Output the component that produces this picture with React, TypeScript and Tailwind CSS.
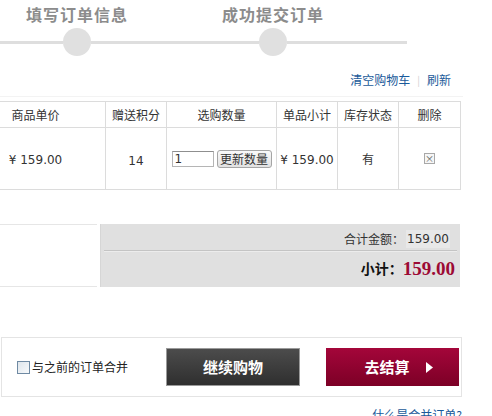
import React from "react";

const cjk = "font-['Noto_Sans_CJK_SC','Noto_Sans',sans-serif]";

function Step({ title }: { title: string }) {
  return (
    <div className="flex w-[28px] shrink-0 flex-col items-center">
      <div className="mt-[3px] h-[22px] whitespace-nowrap text-[16px] font-bold leading-[22px] tracking-[1px] text-[#8c8c8c]">
        {title}
      </div>
      <div className="mt-[3px] h-[28px] w-[28px] rounded-full bg-[#e0e0e0]" />
    </div>
  );
}

export default function App() {
  const head = ["商品单价", "赠送积分", "选购数量", "单品小计", "库存状态", "删除"];
  return (
    <div className={`relative h-[416px] w-[492px] overflow-hidden bg-white text-[12px] text-[#333] ${cjk}`}>
      {/* progress */}
      <div className="flex w-[407px] items-end">
        <div className="mb-[12px] h-[3px] w-[63px] bg-[#dedede]" />
        <Step title="填写订单信息" />
        <div className="mb-[12px] h-[3px] w-[168px] bg-[#dedede]" />
        <Step title="成功提交订单" />
        <div className="mb-[12px] h-[3px] flex-1 bg-[#dedede]" />
      </div>

      {/* links */}
      <div className="mt-[16px] flex h-[25px] w-[463px] items-start justify-end border-b border-[#f3f3f3] pr-[12px] leading-[16px]">
        <span className="text-[#1a5a9a]">清空购物车</span>
        <span className="mx-[7px] text-[10px] text-[#d0d0d0]">|</span>
        <span className="text-[#1a5a9a]">刷新</span>
      </div>

      {/* table */}
      <div className="ml-[-34px] mt-[4px] grid w-[495px] grid-cols-[140px_61px_110px_61px_61px_62px] border-t border-[#dcdcdc]">
        {head.map((h) => (
          <div
            key={h}
            className="flex h-[26px] items-center justify-center border-b border-r border-[#dcdcdc] text-[12px] text-[#333]"
          >
            {h}
          </div>
        ))}
        <div className="flex h-[62px] items-center justify-center border-b border-r border-[#dcdcdc] pt-[2px] font-['DejaVu_Sans',sans-serif] text-[12px]">
          ¥ 159.00
        </div>
        <div className="flex h-[62px] items-center justify-center border-b border-r border-[#dcdcdc] pt-[4px] font-['DejaVu_Sans',sans-serif] text-[12px]">
          14
        </div>
        <div className="flex h-[62px] items-center justify-center gap-[3px] border-b border-r border-[#dcdcdc]">
          <input
            readOnly
            value="1"
            className="h-[16px] w-[42px] border border-[#b5b5b5] border-t-[#8f8f8f] bg-white px-[2px] font-['DejaVu_Sans',sans-serif] text-[12px] leading-[14px] text-[#333] outline-none"
          />
          <button className="flex h-[18px] w-[55px] items-center justify-center rounded-[3px] border border-[#a5a5a5] bg-gradient-to-b from-[#fafafa] to-[#e2e2e2] text-[12px] leading-[16px] text-[#333]">
            更新数量
          </button>
        </div>
        <div className="flex h-[62px] items-center justify-center border-b border-r border-[#dcdcdc] pt-[2px] font-['DejaVu_Sans',sans-serif] text-[12px]">
          ¥ 159.00
        </div>
        <div className="flex h-[62px] items-center justify-center border-b border-r border-[#dcdcdc] text-[12px]">
          有
        </div>
        <div className="flex h-[62px] items-center justify-center border-b border-r border-[#dcdcdc]">
          <span className="flex h-[11px] w-[11px] items-center justify-center border border-[#a8a8a8] bg-[#f6f6f6] text-[9px] leading-none text-[#555]">
            ×
          </span>
        </div>
      </div>

      {/* summary */}
      <div className="mt-[34px] flex h-[63px] w-[460px]">
        <div className="w-[97px] border-y border-[#e6e6e6]" />
        <div className="ml-[3px] flex flex-1 flex-col border-l border-[#d6d6d6] bg-[#e0e0e0]">
          <div className="flex h-[26px] items-center justify-end pr-[10px] pt-[4px]">
            <span>合计金额：</span>
            <span className="ml-[2px] bg-[#e8e8e8] px-[1px] font-['DejaVu_Sans',sans-serif] text-[12px]">159.00</span>
          </div>
          <div className="mx-[3px] border-t border-b border-t-[#c4c4c4] border-b-[#ececec]" />
          <div className="flex flex-1 items-center justify-end pr-[5px] pb-[2px]">
            <span className="text-[14px] font-bold text-[#111]">小计：</span>
            <span className="font-['Liberation_Serif',serif] text-[19px] font-bold leading-[22px] text-[#9c0a34]">159.00</span>
          </div>
        </div>
      </div>

      {/* bottom bar */}
      <div className="ml-[1px] mt-[50px] flex h-[60px] w-[461px] items-center border border-[#e4e4e4]">
        <div className="flex w-[164px] shrink-0 items-center pl-[15px]">
          <span className="h-[13px] w-[13px] border border-[#6f8aa3] bg-gradient-to-br from-[#dfe6ec] to-[#f7f9fb]" />
          <span className="ml-[2px] text-[12px] text-[#222]">与之前的订单合并</span>
        </div>
        <button className="flex h-[38px] w-[134px] shrink-0 items-center justify-center border border-[#9a9a9a] bg-gradient-to-b from-[#4c4c4c] to-[#2f2f2f] text-[15px] font-bold text-white">
          继续购物
        </button>
        <button className="ml-[26px] flex h-[38px] w-[133px] shrink-0 items-center justify-center bg-gradient-to-b from-[#a4063a] to-[#7c0026] pl-[12px] text-[15px] font-bold text-white">
          去结算
          <svg className="ml-[16px]" width="7" height="11" viewBox="0 0 7 11">
            <polygon points="0,0 7,5.5 0,11" fill="#ffffff" />
          </svg>
        </button>
      </div>
      <div className="mt-[10px] w-[462px] text-right text-[12px] leading-[16px] text-[#1a5a9a]">什么是合并订单?</div>
    </div>
  );
}
